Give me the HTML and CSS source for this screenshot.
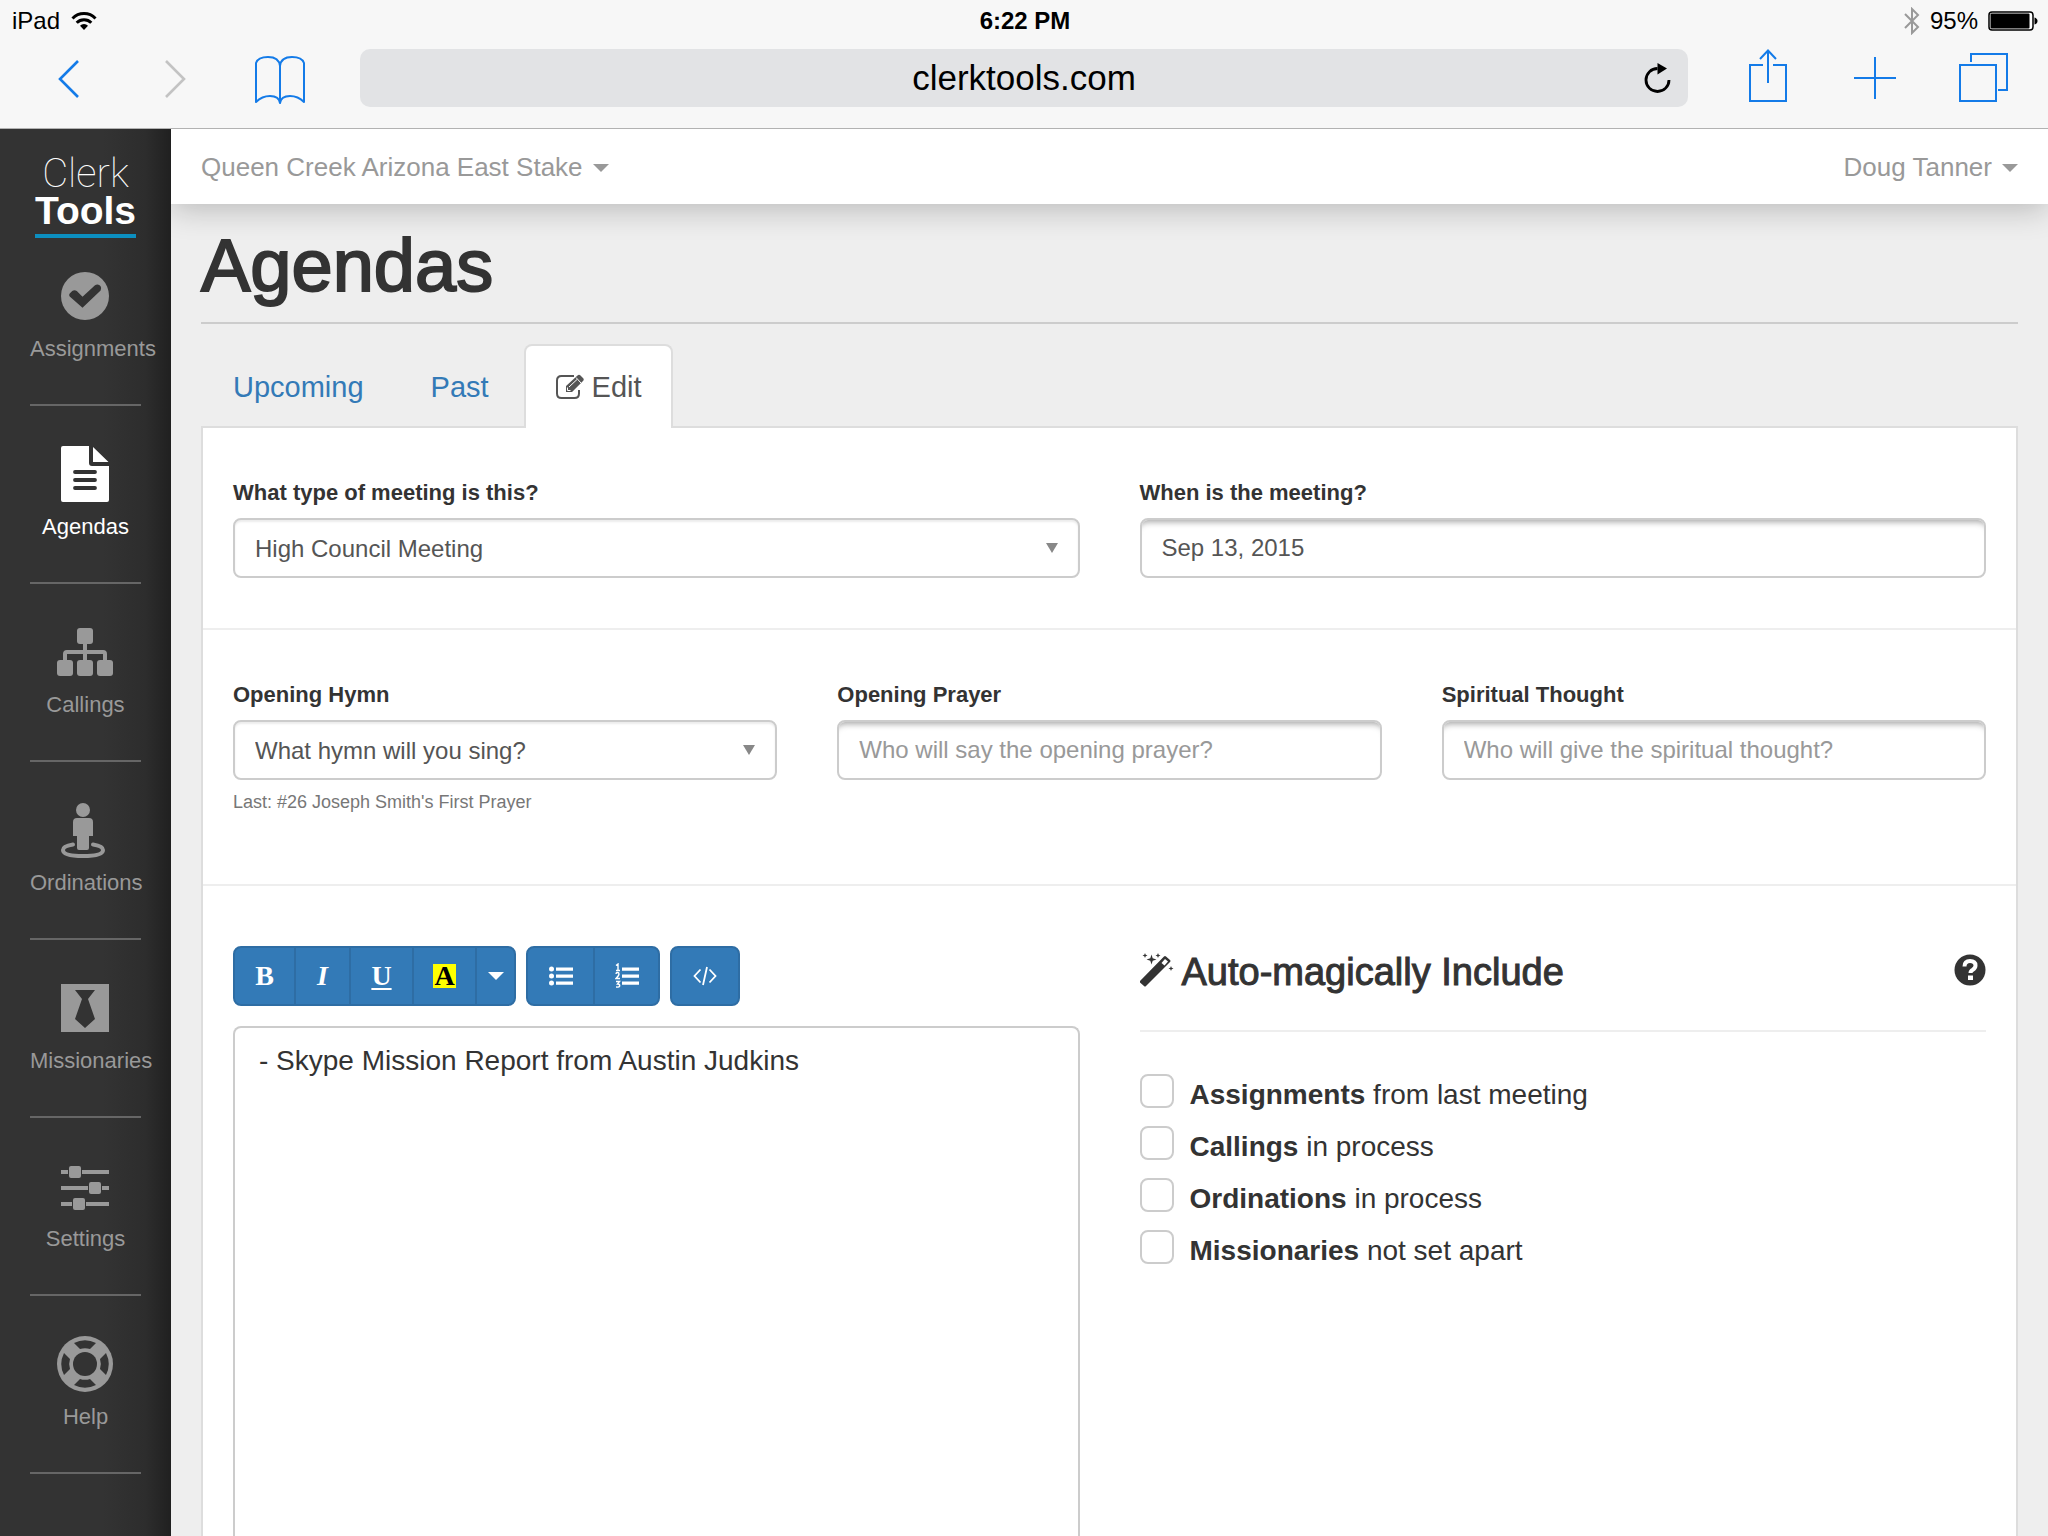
FILE: index.html
```html
<!DOCTYPE html>
<html lang="en">
<head>
<meta charset="utf-8">
<meta name="viewport" content="width=device-width, initial-scale=1">
<title>Clerk Tools - Agendas</title>
<link rel="stylesheet" href="styles.css">
</head>
<body>
<header class="browser">
  <div class="status">
    <div class="status-side">
      <span>iPad</span>
      <svg class="wifi" width="26" height="20" viewBox="0 0 26 20" fill="none" stroke="#000" stroke-width="3"><path d="M1.5 7.5a16 16 0 0 1 23 0M5.7 11.7a10.3 10.3 0 0 1 14.6 0"/><path d="M13 19l-4-4.3a5.6 5.6 0 0 1 8 0z" fill="#000" stroke="none"/></svg>
    </div>
    <strong class="clock">6:22 PM</strong>
    <div class="status-side status-right">
      <svg width="16" height="28" viewBox="0 0 16 28" fill="none" stroke="#999" stroke-width="2"><path d="M1 7l13 13-6 6V2l6 6L1 21"/></svg>
      <span>95%</span>
      <svg width="50" height="20" viewBox="0 0 50 20"><rect x="1" y="1" width="44" height="18" rx="3" fill="#fff" stroke="#000" stroke-width="1.5"/><rect x="2.500" y="2.500" width="39" height="15" rx="1" fill="#000"/><path d="M46.500 6.500q3 1 3 3.500t-3 3.500z"/></svg>
    </div>
  </div>
  <div class="toolbar">
    <button class="tool" aria-label="Back"><svg width="60" height="58" viewBox="0 0 60 58" fill="none" stroke="#147be8" stroke-width="2.600"><path d="M39 12L21 30l18 18"/></svg></button>
    <button class="tool" aria-label="Forward"><svg width="60" height="58" viewBox="0 0 60 58" fill="none" stroke="#c3c3c3" stroke-width="2.600"><path d="M21 12l18 18-18 18"/></svg></button>
    <button class="tool" aria-label="Bookmarks"><svg width="60" height="58" viewBox="0 0 60 58" fill="none" stroke="#147be8" stroke-width="2" stroke-linejoin="round"><path d="M29 54q-1-7-10-7-8 0-14 6V14q2-6 12-6 11 0 12 9 1-9 12-9 10 0 12 6v39q-6-6-14-6-9 0-10 7zV17"/></svg></button>
    <form class="address">
      <input class="address-field" type="text" aria-label="Address" value="clerktools.com">
      <button class="reload" type="button" aria-label="Reload"><svg width="28" height="32" viewBox="0 0 28 32"><path d="M25 18a11.500 11.500 0 1 1-11.500-11.500" fill="none" stroke="#000" stroke-width="2.800"/><path d="M13.500 1v11.500l9.500-6z"/></svg></button>
    </form>
    <button class="tool tool-right" aria-label="Share"><svg width="60" height="58" viewBox="0 0 60 58" fill="none" stroke="#147be8" stroke-width="2"><path d="M24 16H11v36h36V16H34M29 34V2M21 10l8-8.500 8 8.500"/></svg></button>
    <button class="tool tool-right" aria-label="New tab"><svg width="60" height="58" viewBox="0 0 60 58" fill="none" stroke="#147be8" stroke-width="2"><path d="M8 29h42M29 8v42"/></svg></button>
    <button class="tool tool-right" aria-label="Tabs"><svg width="60" height="58" viewBox="0 0 60 58" fill="none" stroke="#147be8" stroke-width="2"><path d="M7 16h36v36H7zM18 13V5h36v36h-9"/></svg></button>
  </div>
</header>
<div class="app">
  <aside class="sidebar">
    <a class="logo" href="#"><span class="logo-thin">Clerk</span><span class="logo-bold">Tools</span></a>
    <nav class="menu">
      <a class="menu-item" href="#"><svg width="56" height="56" viewBox="0 0 56 56"><circle cx="28" cy="28" r="24" fill="#999"/><path d="M12.700 25.500l2.500-2.500q2.300-1.600 4.600 0l5.700 5.700L38 17.300q2.300-1.600 4.600 0l1 1q1.300 2 0 4.300L25.500 39.700 12.700 28.500q-1.200-1.500 0-3z" fill="#333"/></svg><span>Assignments</span></a>
      <a class="menu-item active" href="#"><svg width="56" height="56" viewBox="0 0 56 56" fill="#fff"><path d="M6 0h26v17q0 3 3 3h17v34q0 2-2 2H6q-2 0-2-2V2q0-2 2-2zM36 1l15.500 15H36z"/><path d="M18 26h20M18 34h20M18 42h20" stroke="#333" stroke-width="3.800" stroke-linecap="round"/></svg><span>Agendas</span></a>
      <a class="menu-item" href="#"><svg width="56" height="56" viewBox="0 0 56 56" fill="#999"><rect x="20" y="4" width="16" height="16" rx="3"/><rect x="0" y="36" width="16" height="16" rx="3"/><rect x="20" y="36" width="16" height="16" rx="3"/><rect x="40" y="36" width="16" height="16" rx="3"/><path d="M28 18v20M8 38V30q0-2 2-2h36q2 0 2 2v8" fill="none" stroke="#999" stroke-width="4"/></svg><span>Callings</span></a>
      <a class="menu-item" href="#"><svg width="56" height="56" viewBox="0 0 56 56" fill="#999"><circle cx="26" cy="8" r="7"/><path d="M20 16h12q4 0 4 4v14h-4v12q0 2-2 2H22q-2 0-2-2V34h-4V20q0-4 4-4z"/><path d="M16 42.500Q6 44 6 48q0 6 20 6t20-6q0-4-10-5.500" fill="none" stroke="#999" stroke-width="4" stroke-linecap="round"/></svg><span>Ordinations</span></a>
      <a class="menu-item" href="#"><svg width="56" height="56" viewBox="0 0 56 56"><path d="M4 4h48v48H4z" fill="#999"/><path d="M18 10h20l-7 9 7 20-10 9-10-9 7-20z" fill="#333"/></svg><span>Missionaries</span></a>
      <a class="menu-item" href="#"><svg width="56" height="56" viewBox="0 0 56 56" fill="#999"><path d="M4 12h7v4H4zM25 12h27v4H25zM4 28h27v4H4zM45 28h7v4h-7zM4 44h11v4H4zM29 44h23v4H29z"/><rect x="12" y="8" width="12" height="12" rx="2"/><rect x="32" y="24" width="12" height="12" rx="2"/><rect x="16" y="40" width="12" height="12" rx="2"/></svg><span>Settings</span></a>
      <a class="menu-item" href="#"><svg width="56" height="56" viewBox="0 0 56 56"><circle cx="28" cy="28" r="28" fill="#999"/><circle cx="28" cy="28" r="12" fill="#333"/><path d="M17 7q11-5.500 22 0l-6 6q-5-1.700-10 0zM17 49q11 5.500 22 0l-6-6q-5 1.700-10 0zM7 17q-5.500 11 0 22l6-6q-1.700-5 0-10zM49 17q5.500 11 0 22l-6-6q1.700-5 0-10z" fill="#333"/></svg><span>Help</span></a>
    </nav>
  </aside>
  <div class="page">
    <div class="topbar">
      <button class="dropdown" type="button">Queen Creek Arizona East Stake <span class="caret"></span></button>
      <button class="dropdown" type="button">Doug Tanner <span class="caret"></span></button>
    </div>
    <main class="content">
      <h1 class="title">Agendas</h1>
      <nav class="tabs">
        <a class="tab" href="#">Upcoming</a>
        <a class="tab" href="#">Past</a>
        <a class="tab tab-active" href="#"><svg width="28" height="26" viewBox="0 0 28 26" fill="none" stroke="#555"><path d="M18 2H5.500Q1 2 1 6.500v13Q1 24 5.500 24h13q4.500 0 4.500-4.500V16" stroke-width="2"/><path d="M10 18v-6L21.500 1.500q1.500-1.500 3 0L27 4q1.500 1.500 0 3L16 18z" fill="#555" stroke="none"/><path d="M20 3.500l5 5.500M13 13l8-7.500M11.500 13.500v3h3" stroke="#fff" stroke-width="1"/></svg>Edit</a>
      </nav>
      <form class="panel">
        <section class="row two">
          <div class="field">
            <label for="type">What type of meeting is this?</label>
            <div class="select"><select id="type"><option>High Council Meeting</option></select><svg width="12" height="10" viewBox="0 0 12 10"><path d="M0 0h12L6 10z" fill="#888"/></svg></div>
          </div>
          <div class="field">
            <label for="date">When is the meeting?</label>
            <input class="input" id="date" type="text" value="Sep 13, 2015">
          </div>
        </section>
        <section class="row three">
          <div class="field">
            <label for="hymn">Opening Hymn</label>
            <div class="select"><select id="hymn"><option>What hymn will you sing?</option></select><svg width="12" height="10" viewBox="0 0 12 10"><path d="M0 0h12L6 10z" fill="#888"/></svg></div>
            <p class="hint">Last: #26 Joseph Smith's First Prayer</p>
          </div>
          <div class="field">
            <label for="prayer">Opening Prayer</label>
            <input class="input" id="prayer" type="text" placeholder="Who will say the opening prayer?">
          </div>
          <div class="field">
            <label for="thought">Spiritual Thought</label>
            <input class="input" id="thought" type="text" placeholder="Who will give the spiritual thought?">
          </div>
        </section>
        <section class="row two notes">
          <div class="editor">
            <div class="editor-tools">
              <div class="group">
                <button class="btn" type="button" aria-label="Bold">B</button><button class="btn btn-narrow italic" type="button" aria-label="Italic">I</button><button class="btn underline" type="button" aria-label="Underline">U</button><button class="btn" type="button" aria-label="Highlight"><span class="highlight">A</span></button><button class="btn btn-caret" type="button" aria-label="More colors"><span class="caret"></span></button>
              </div>
              <div class="group">
                <button class="btn btn-wide" type="button" aria-label="Bulleted list"><svg width="24" height="20" viewBox="0 0 24 20" fill="#fff"><circle cx="2.500" cy="3" r="2.500"/><circle cx="2.500" cy="10" r="2.500"/><circle cx="2.500" cy="17" r="2.500"/><path d="M7 1.500h17v3.200H7zM7 8.500h17v3.200H7zM7 15.500h17v3.200H7z"/></svg></button><button class="btn btn-wide" type="button" aria-label="Numbered list"><svg width="24" height="26" viewBox="0 0 24 26" fill="#fff"><path d="M7 4.500h17v3.200H7zM7 11.500h17v3.200H7zM7 18.500h17v3.200H7z"/><path d="M1 2.500L3 1v6M1 7.500h4M1 11q0-1.500 1.500-1.500T4 11q0 1.500-3 4.500h4M1 18.500h3.500l-2 2.500q2.200 0 2.200 1.700T1 24" fill="none" stroke="#fff" stroke-width="1.400"/></svg></button>
              </div>
              <div class="group">
                <button class="btn btn-code" type="button" aria-label="Source code"><svg width="24" height="20" viewBox="0 0 24 20" fill="none" stroke="#fff" stroke-width="1.800"><path d="M7.500 3.500L1.500 10l6 6.500M16.500 3.500l6 6.500-6 6.500M14 1l-4 18"/></svg></button>
              </div>
            </div>
            <textarea class="editor-text" aria-label="Agenda notes">- Skype Mission Report from Austin Judkins</textarea>
          </div>
          <div class="include">
            <div class="include-head">
              <svg width="34" height="34" viewBox="0 0 34 34"><path d="M0 28L24 3.500q1-1 2 0L30 7q1 1 0 2L6 33q-1 1-2 0l-4-3.500q-.800-.800 0-1.500z" fill="#333"/><path d="M21.500 10l3.500-4 3 2.500-3.500 4z" fill="#fff"/><path d="M11.500 1.500l1.200 3.800 3.800 1.200-3.800 1.200-1.200 3.800-1.200-3.800L6.500 6.500l3.800-1.200zM5 0l.700 1.800 1.800.700-1.800.700L5 5l-.700-1.800-1.800-.700 1.800-.700zM18 0l.700 1.800 1.800.700-1.800.700L18 5l-.700-1.800-1.800-.700 1.800-.700zM31 13l.700 1.800 1.800.700-1.800.700-.700 1.800-.700-1.800-1.800-.700 1.800-.700z" fill="#333"/></svg>
              <h2>Auto-magically Include</h2>
              <button class="help" type="button" aria-label="Help with automatic items"><svg width="32" height="32" viewBox="0 0 32 32"><circle cx="16" cy="16" r="15.500" fill="#333"/><path d="M10.500 12.500q0-5.500 5.500-5.500 5.500 0 5.500 4.500 0 2.500-2.700 4.200-2.300 1.300-2.300 3.300" fill="none" stroke="#fff" stroke-width="4"/><path d="M14 21.500h5V26h-5z" fill="#fff"/></svg></button>
            </div>
            <div class="checks">
              <label class="check"><input type="checkbox"><span><strong>Assignments</strong> from last meeting</span></label>
              <label class="check"><input type="checkbox"><span><strong>Callings</strong> in process</span></label>
              <label class="check"><input type="checkbox"><span><strong>Ordinations</strong> in process</span></label>
              <label class="check"><input type="checkbox"><span><strong>Missionaries</strong> not set apart</span></label>
            </div>
          </div>
        </section>
      </form>
    </main>
  </div>
</div>
</body>
</html>
```
FILE: styles.css
```css
* { box-sizing: border-box; }

body {
  margin: 0;
  min-height: 100vh;
  display: flex;
  flex-direction: column;
  font-family: "Liberation Sans", Arial, sans-serif;
  font-size: 28px;
  color: #333;
  background: #eee;
}

button, input, select, textarea { font: inherit; color: inherit; }
button { margin: 0; padding: 0; border: 0; background: none; cursor: pointer; }
a { text-decoration: none; }
svg { display: block; flex: none; }

/* Browser chrome */
.browser { background: #f7f7f7; border-bottom: 1px solid #b2b2b2; color: #000; }
.status {
  display: grid;
  grid-template-columns: 1fr auto 1fr;
  align-items: center;
  height: 40px;
  padding: 2px 10px 0 12px;
  font-size: 24px;
}
.status-side { display: flex; align-items: center; gap: 11px; }
.status-right { justify-content: flex-end; gap: 10px; }
.toolbar { display: flex; height: 88px; padding: 9px 12px 21px 16px; }
.tool { width: 106px; display: flex; justify-content: center; }
.tool-right { width: 107px; }
.address {
  flex: 1;
  display: grid;
  grid-template-columns: 60px 1fr 60px;
  margin: 0 27px 0 26px;
  background: #e2e3e5;
  border-radius: 10px;
}
.address-field {
  grid-column: 2;
  min-width: 0;
  padding: 0;
  border: 0;
  background: none;
  text-align: center;
  font-size: 35px;
}
.reload { display: flex; align-items: center; justify-content: center; }

/* App frame */
.app { flex: 1; display: flex; }
.sidebar {
  width: 171px;
  flex: none;
  padding: 25px 30px 0;
  background: #333 linear-gradient(to right, #333 60%, #2d2d2d 85%, #202020);
}
.logo { display: block; margin: 0 5px 30px; border-bottom: 4px solid #0c8fc0; color: #fff; text-align: center; }
.logo-thin, .logo-bold { display: block; }
.logo-thin { font: 100 40px/40px Roboto, sans-serif; }
.logo-bold { font-size: 39px; font-weight: bold; line-height: 34px; padding-bottom: 6px; display: flex; justify-content: center; }
.menu { display: flex; flex-direction: column; gap: 40px; }
.menu-item {
  display: flex;
  flex-direction: column;
  align-items: safe center;
  gap: 10px;
  padding-bottom: 40px;
  border-bottom: 2px solid #666;
  color: #999;
  font-size: 22px;
  line-height: 30px;
}
.menu-item svg { margin-right: 1px; }
.menu-item.active { color: #fff; }

.page { flex: 1; min-width: 0; display: flex; flex-direction: column; overflow: hidden; }
.topbar {
  position: relative;
  display: flex;
  justify-content: space-between;
  height: 75px;
  padding: 2px 30px 0;
  background: #fff;
  box-shadow: 0 4px 32px rgba(0, 0, 0, .24);
  color: #999;
  font-size: 26px;
}
.dropdown { display: flex; align-items: center; gap: 10px; }
.caret { border: 8px solid transparent; border-top-color: currentColor; border-bottom: 0; }

.content { flex: 1; display: flex; flex-direction: column; padding: 22px 30px 0; }
.title {
  margin: 0 0 20px;
  padding-bottom: 16px;
  border-bottom: 2px solid #ccc;
  font-size: 74px;
  font-weight: normal;
  line-height: 80px;
  -webkit-text-stroke: 2px #333;
}

/* Tabs */
.tabs { display: flex; gap: 4px; font-size: 29px; }
.tab {
  display: flex;
  align-items: center;
  gap: 8px;
  height: 84px;
  margin-bottom: -2px;
  padding: 0 29px 0 30px;
  border: 2px solid transparent;
  border-bottom: 0;
  border-radius: 8px 8px 0 0;
  color: #337ab7;
}
.tab-active { position: relative; background: #fff; border-color: #ddd; color: #555; }

/* Form panel */
.panel {
  flex: 1;
  display: flex;
  flex-direction: column;
  background: #fff;
  border: 2px solid #ddd;
  border-bottom: 0;
}
.row { display: grid; gap: 60px; padding: 50px 30px; border-bottom: 2px solid #eee; }
.two { grid-template-columns: repeat(2, minmax(0, 1fr)); }
.three { grid-template-columns: repeat(3, minmax(0, 1fr)); }
.field { display: flex; flex-direction: column; }
.field label { margin-bottom: 10px; font-size: 22px; font-weight: bold; line-height: 30px; }
.input, .select select {
  width: 100%;
  height: 60px;
  padding: 0 20px;
  border: 2px solid #ccc;
  border-radius: 8px;
  background: #fff;
  color: #555;
  font-size: 24px;
}
.input { box-shadow: inset 0 8px 6px -6px rgba(0, 0, 0, .35); }
.input::placeholder { color: #999; }
.select { display: grid; align-items: center; }
.select select { grid-area: 1 / 1; appearance: none; box-shadow: inset 0 2px 2px rgba(0, 0, 0, .08); }
.select svg { grid-area: 1 / 1; justify-self: end; margin-right: 22px; pointer-events: none; }
.hint { margin: 9px 0 19px; color: #777; font-size: 18px; line-height: 26px; }

/* Notes editor */
.notes { flex: 1; padding: 60px 30px 0; border: 0; }
.editor { display: flex; flex-direction: column; gap: 20px; }
.editor-tools { display: flex; gap: 10px; }
.group { display: flex; border: 2px solid #2e6da4; border-radius: 8px; background: #337ab7; overflow: hidden; }
.btn {
  width: 59px;
  height: 56px;
  display: flex;
  align-items: center;
  justify-content: center;
  color: #fff;
  font-family: "Liberation Serif", "Times New Roman", serif;
  font-size: 28px;
  font-weight: bold;
}
.btn + .btn { border-left: 2px solid #2e6da4; width: 63px; }
.btn + .btn-narrow { width: 55px; }
.btn + .btn-caret { width: 39px; }
.btn-wide, .btn + .btn-wide { width: 65px; }
.btn-code { width: 66px; }
.italic { font-style: italic; }
.underline { text-decoration: underline; text-underline-offset: 3px; text-decoration-thickness: 2px; }
.highlight { padding: 0 1px; background: #ff0; color: #000; line-height: 24px; }
.editor-text {
  flex: 1;
  min-height: 480px;
  padding: 13px 24px;
  border: 2px solid #ccc;
  border-bottom: 0;
  border-radius: 8px 8px 0 0;
  background: #fff;
  line-height: 40px;
  resize: none;
}

/* Auto-include list */
.include-head {
  display: flex;
  align-items: center;
  gap: 8px;
  height: 86px;
  padding-bottom: 36px;
  border-bottom: 2px solid #eee;
}
.include h2 { flex: 1; margin: 0; padding-top: 4px; font-size: 38px; font-weight: normal; line-height: 48px; -webkit-text-stroke: 1px #333; }
.checks { display: grid; gap: 10px; padding-top: 42px; }
.check { display: flex; gap: 16px; line-height: 42px; }
.check input { appearance: none; width: 34px; height: 34px; margin: 0; border: 2px solid #ccc; border-radius: 8px; background: #fff; }
```
